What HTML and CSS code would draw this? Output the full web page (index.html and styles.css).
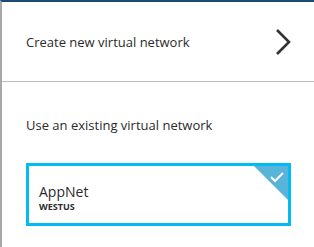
FILE: index.html
```html
<!DOCTYPE html>
<html lang="en">
<head>
  <meta charset="UTF-8">
  <title>Virtual network</title>
  <link rel="stylesheet" href="styles.css">
</head>
<body>
  <div class="blade">
    <!-- Create new -->
    <div class="create-row">
      <span class="row-label">Create new virtual network</span>
      <svg class="chevron" width="16" height="26" viewBox="0 0 16 26">
        <polyline points="2,1 14,13 2,25" fill="none" stroke="#333" stroke-width="2.6"/>
      </svg>
    </div>

    <!-- Existing networks -->
    <div class="existing">
      <div class="row-label">Use an existing virtual network</div>
      <div class="vnet-card">
        <div class="vnet-name">AppNet</div>
        <div class="vnet-region">WESTUS</div>
        <svg class="check-corner" width="34" height="34" viewBox="0 0 34 34">
          <polygon points="0,0 34,0 34,34" fill="#59b4d9"/>
          <polyline points="17,11 21,15 29,7" fill="none" stroke="#fff" stroke-width="2"/>
        </svg>
      </div>
    </div>
  </div>
</body>
</html>
```

FILE: styles.css
```css
body {
  margin: 0;
  font-family: 'Open Sans', 'Noto Sans', sans-serif;
  color: #2b2b2b;
  background-color: #FFFFFF;
}

.blade {
  height: 245px;
  border-top: 2px solid #1e4a72;
  border-left: 2px solid #a8a8a8;
}

.create-row {
  height: 79px;
  display: flex;
  align-items: center;
  justify-content: space-between;
  padding: 0 23px 0 24px;
  border-bottom: 1px solid #bcbcbc;
}

.row-label {
  font-size: 13px;
}

.chevron {
  display: block;
}

.existing {
  padding: 34px 23px 0 24px;
}

.vnet-card {
  position: relative;
  margin-top: 29px;
  height: 51px;
  border: 3px solid #00bcf2;
  padding: 6px 10px 0;
  display: flex;
  flex-direction: column;
  justify-content: center;
}

.vnet-name {
  font-size: 14px;
  line-height: 19px;
}

.vnet-region {
  font-size: 9px;
  font-weight: bold;
  line-height: 12px;
}

.check-corner {
  position: absolute;
  top: 0;
  right: 0;
}
```
